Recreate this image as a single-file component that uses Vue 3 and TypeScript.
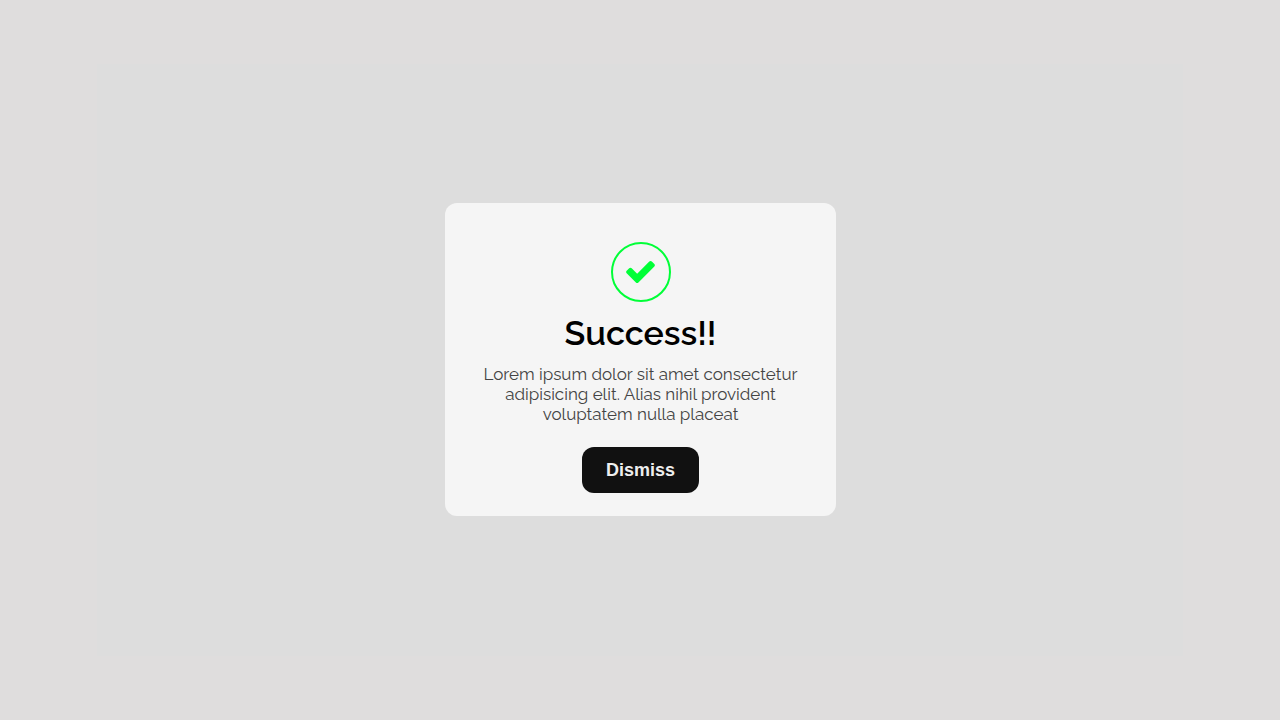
<script setup lang="ts">
import { ref } from 'vue'

const open = ref<boolean>(true)
const title = 'Success!!'
const message = 'Lorem ipsum dolor sit amet consectetur adipisicing elit. Alias nihil provident voluptatem nulla placeat'
</script>

<template>
  <main class="page">
    <div class="stage">
      <section v-if="open" class="card" role="alertdialog" aria-labelledby="dialog-title" aria-describedby="dialog-message">
        <div class="badge">
          <svg class="check" viewBox="121 334 1550 1188" aria-hidden="true">
            <path d="M1671 566q0 40-28 68l-724 724-136 136q-28 28-68 28t-68-28l-136-136-362-362q-28-28-28-68t28-68l136-136q28-28 68-28t68 28l294 295 656-657q28-28 68-28t68 28l136 136q28 28 28 68z" />
          </svg>
        </div>
        <h1 id="dialog-title" class="title">{{ title }}</h1>
        <p id="dialog-message" class="message">{{ message }}</p>
        <button class="dismiss" type="button" @click="open = false">Dismiss</button>
      </section>
    </div>
  </main>
</template>

<style>
body {
  margin: 0;
  background: #dfdddd;
}
</style>

<style scoped>
.page {
  box-sizing: border-box;
  display: flex;
  min-height: 100vh;
  padding: 64px 97px;
  background: #dfdddd;
}

.stage {
  display: flex;
  flex: 1;
  align-items: center;
  justify-content: center;
  padding: 0 0 2px 1px;
  background: #dddddd;
}

.card {
  box-sizing: border-box;
  display: flex;
  flex-direction: column;
  align-items: center;
  width: 100%;
  max-width: 391px;
  padding: 39px 36px 23px;
  border-radius: 12px;
  background: #f5f5f5;
  font-family: Raleway, Lato, "Open Sans", sans-serif;
  text-align: center;
}

.badge {
  box-sizing: border-box;
  display: flex;
  align-items: center;
  justify-content: center;
  width: 60px;
  height: 60px;
  border: 2px solid #00ff37;
  border-radius: 50%;
}

.check {
  width: 29px;
  height: 22px;
  fill: #00ff37;
}

.title {
  margin: 11px 0;
  color: #000;
  font-size: 34px;
  font-weight: 600;
  line-height: 40px;
}

.message {
  margin: 0 0 23px;
  color: #444;
  font-size: 17px;
  line-height: 20px;
}

.dismiss {
  padding: 12px 24px;
  border: 0;
  border-radius: 12px;
  background: #111;
  color: #eee;
  font-family: "Liberation Sans", Arial, sans-serif;
  font-size: 18px;
  font-weight: 700;
  line-height: 22px;
  cursor: pointer;
}
</style>
